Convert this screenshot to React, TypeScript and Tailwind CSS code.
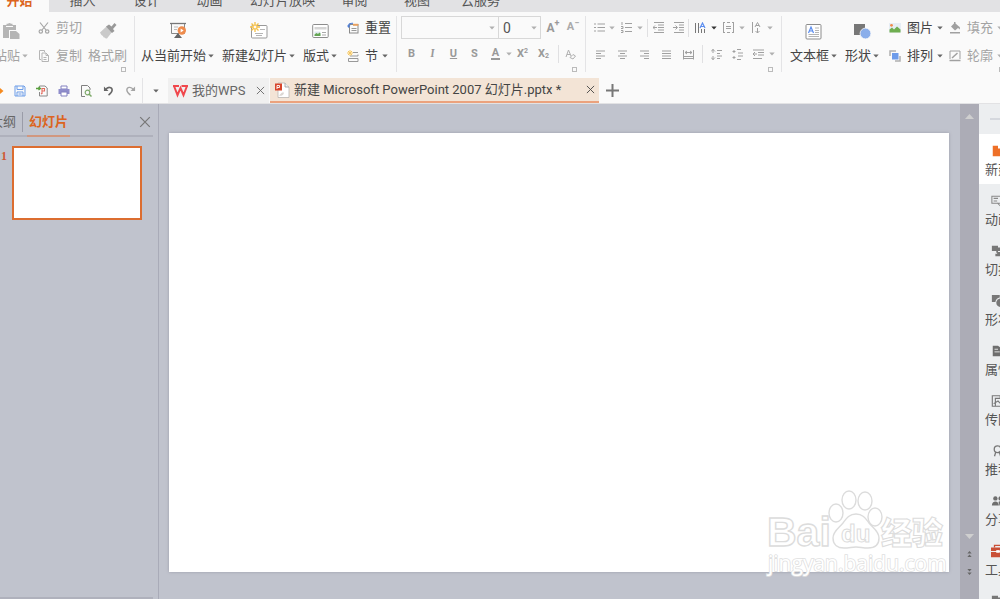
import type { ReactNode } from "react";
import clsx from "clsx";

const menuTabs = [
  { label: "插入", width: "w-[66px]" },
  { label: "设计", width: "w-[62px]" },
  { label: "动画", width: "w-[64px]" },
  { label: "幻灯片放映", width: "w-[82px]" },
  { label: "审阅", width: "w-[62px]" },
  { label: "视图", width: "w-[63px]" },
  { label: "云服务", width: "w-[64px]" },
];

const Caret = ({ dark = false, faint = false }: { dark?: boolean; faint?: boolean }) => (
  <svg
    width="6"
    height="4"
    viewBox="0 0 6 4"
    className={clsx("shrink-0", dark ? "text-[#333]" : faint ? "text-[#b0b0b0]" : "text-[#666]")}
  >
    <path d="M0.3 0.5h5.4L3 3.500z" fill="currentColor" />
  </svg>
);

const CloseIcon = ({ size = 9 }: { size?: number }) => (
  <svg width={size} height={size} viewBox="0 0 10 10" fill="none" stroke="currentColor" strokeWidth="1">
    <path d="M1 1l8 8M9 1L1 9" />
  </svg>
);

// Small square in the corner of a ribbon group
const Launcher = () => (
  <button aria-label="更多设置" className="absolute right-2 bottom-0 h-[5px] w-[5px] border border-[#bbb]" />
);

const Group = ({ children, className }: { children: ReactNode; className?: string }) => (
  <div className={clsx("relative flex h-14 shrink-0 border-r border-[#e4e4e6]", className)}>{children}</div>
);

interface ButtonProps {
  label: string;
  icon: ReactNode;
  muted?: boolean;
  caret?: boolean;
  className?: string;
}

const BigButton = ({ label, icon, muted, caret, className }: ButtonProps) => (
  <button
    className={clsx(
      "flex shrink-0 flex-col items-center gap-2 pt-1.5 whitespace-nowrap",
      muted ? "text-[#a3a3a3]" : "text-[#444]",
      className,
    )}
  >
    <span className="flex h-[18px] items-center">{icon}</span>
    <span className="flex items-center gap-0.5 leading-4">
      {label}
      {caret && <Caret faint={muted} />}
    </span>
  </button>
);

const SmallButton = ({ label, icon, muted, caret }: ButtonProps) => (
  <button
    className={clsx("flex h-5 shrink-0 items-center whitespace-nowrap", muted ? "text-[#a3a3a3]" : "text-[#444]")}
  >
    <span className="flex w-[18px] shrink-0">{icon}</span>
    {label}
    {caret && (
      <span className="ml-1">
        <Caret faint={muted} />
      </span>
    )}
  </button>
);

const ToolButton = ({ label, className, children }: { label: string; className?: string; children: ReactNode }) => (
  <button aria-label={label} className={clsx("flex h-4 shrink-0 items-center justify-center", className)}>
    {children}
  </button>
);

const Sep = () => <span className="h-[18px] w-px shrink-0 bg-[#e0e0e2]" />;

/* ---------- line icons used in the paragraph group ---------- */
const LineIcon = ({ d, width = 11 }: { d: string; width?: number }) => (
  <svg width={width} height="11" viewBox={`0 0 ${width} 11`} fill="none" stroke="#a0a0a0" strokeWidth="1">
    <path d={d} />
  </svg>
);

const IconPaste = () => (
  <svg width="18" height="18" viewBox="0 0 18 18" fill="#b5b5b5">
    <path d="M1 3h3.500V1.800h1.500a2 2 0 0 1 3 0h1.500V3H14v5H7v8H1z" />
    <path d="M4 4.500h7" stroke="#fafafa" />
    <path d="M8 9h6l3.500 3v5H8z" />
  </svg>
);

const IconCut = () => (
  <svg width="12" height="12" viewBox="0 0 12 12" fill="none" stroke="#a5a5a5" strokeWidth="1.200">
    <path d="M2 0.500L8 8M10 0.500L4 8" />
    <circle cx="2.800" cy="9.500" r="1.700" />
    <circle cx="9.200" cy="9.500" r="1.700" />
  </svg>
);

const IconCopy = () => (
  <svg width="12" height="12" viewBox="0 0 12 12" fill="none" stroke="#b5b5b5">
    <path d="M3 9.500H1.500v-9h5V2" />
    <path d="M4 3h4l2.500 2.500v6H4z" />
    <path d="M8 3v2.500h2.500M5.500 7.500h3M5.500 9.500h3" />
  </svg>
);

const IconBrush = () => (
  <svg width="18" height="18" viewBox="0 0 18 18">
    <path d="M1 10.500L7.500 4.500l5.500 5.500-5 6.500c-1.500 0-2-.5-2.500-1-1 0-1.500-.7-1.500-1.500-1.500-.5-2-1.500-3-3.500z" fill="#cacaca" />
    <path d="M7 4.500l3-2 2.500 2L15.500 1l2 2-3.500 4 1.500 2-2.500 2z" fill="#999" />
  </svg>
);

const IconPlay = () => (
  <svg width="18" height="18" viewBox="0 0 18 18" fill="none">
    <path d="M1 1.500h16" stroke="#777" strokeWidth="1.300" />
    <path d="M2.500 2v9.500h13V2" stroke="#888" />
    <path d="M5 5h4M5 7.500h3" stroke="#bbb" />
    <path d="M9 11l-4 5h8z" fill="#666" />
    <circle cx="12.800" cy="8.500" r="4.200" fill="#ee8b4c" />
    <path d="M11.600 6.500v4l3-2z" fill="#fff" />
  </svg>
);

const Spark = () => (
  <g>
    <path d="M5 0v10M0 5h10M1.500 1.500l7 7M8.500 1.500l-7 7" stroke="#f7c145" strokeWidth="1.300" />
    <circle cx="5" cy="5" r="2" fill="#fffaf0" stroke="#f7c145" />
  </g>
);

const IconNewSlide = () => (
  <svg width="18" height="18" viewBox="0 0 18 18" fill="none">
    <rect x="1.500" y="3.500" width="15.500" height="12.500" rx="1" stroke="#999" fill="#fff" />
    <path d="M10 7.500h5M5 11.500h8M6 13.500h6" stroke="#b5b5b5" />
    <Spark />
  </svg>
);

const IconLayout = () => (
  <svg width="17" height="16" viewBox="0 0 17 16" fill="none">
    <rect x="0.700" y="1.500" width="15.500" height="13" rx="1" stroke="#8c8c8c" fill="#fff" />
    <path d="M2.500 4h12v2.500h-12z" fill="#d5d5d5" />
    <path d="M2.500 8.500h6v4.500h-6z" fill="#dfe9ee" />
    <path d="M2.500 13v-1.500L4.500 10l1.500 1 1.500-1.500 1 1V13z" fill="#64a653" />
    <path d="M10 9.500h4M10 12h4" stroke="#aaa" />
  </svg>
);

const IconReset = () => (
  <svg width="12" height="12" viewBox="0 0 12 12" fill="none">
    <rect x="2.500" y="2.500" width="8.500" height="8.500" stroke="#8a8a8a" />
    <path d="M6 1.800h5.300v2H6z" fill="#e9a15f" />
    <path d="M4.500 6.500h5M4.500 8.500h5" stroke="#999" />
    <path d="M1.500 4.500C1.500 2 3 1 6 1.300" stroke="#4f7fd6" strokeWidth="1.200" />
    <path d="M0 3.500h3.500L1.500 6z" fill="#4f7fd6" />
  </svg>
);

const IconSection = () => (
  <svg width="12" height="12" viewBox="0 0 12 12" fill="none" stroke="#999">
    <path d="M6 2.500h5M3 6h8V4.500M1.500 8.500H11v3H1.500z" />
    <path d="M3 0v6M0 3h6M1 1l4 4M5 1L1 5" stroke="#f7c860" />
  </svg>
);

const IconTextBox = () => (
  <svg width="17" height="17" viewBox="0 0 17 17" fill="none">
    <rect x="1" y="1.500" width="15" height="14.500" rx="1" stroke="#8c8c8c" fill="#fff" />
    <path d="M3.500 10L6 4l2.500 6M4.500 8h3" stroke="#5b8def" strokeWidth="1.200" />
    <path d="M10 5h4M10 7.500h4M10 9.500h4M3.500 11.500H14M3.500 13.500H14" stroke="#b5b5b5" />
  </svg>
);

const IconShape = () => (
  <svg width="18" height="18" viewBox="0 0 18 18">
    <path d="M1 2h11v11H1z" fill="#777" />
    <circle cx="12.500" cy="11.500" r="5.400" fill="#8aaeea" stroke="#fafafa" strokeWidth="0.800" />
  </svg>
);

const IconPicture = () => (
  <svg width="12" height="12" viewBox="0 0 12 12">
    <path d="M0 1h12v9.500H0z" fill="#e6edf5" />
    <circle cx="2.500" cy="3.300" r="1.400" fill="#f08a4b" />
    <path d="M0.500 10.500V7.500L3 5.500l2 2L8 4.500l3.500 3v3z" fill="#6fae50" />
  </svg>
);

const IconArrange = () => (
  <svg width="12" height="12" viewBox="0 0 12 12">
    <path d="M1 6V1h6M6 11h5V6" fill="none" stroke="#b0b0b0" strokeWidth="1.500" />
    <path d="M3 3h6.500v6.500H3z" fill="#6d9bea" />
  </svg>
);

const IconFill = () => (
  <svg width="12" height="12" viewBox="0 0 12 12" fill="#a0a0a0">
    <path d="M2 4.500L5 1.500V0h1.500v1.500L10 4.500c1.200.3 1.200 2 .5 3-.5-1-1.500-1.500-1.500-1.500L6 8.500z" />
    <path d="M1 10h10v1.500H1z" />
  </svg>
);

const IconOutline = () => (
  <svg width="12" height="12" viewBox="0 0 12 12" fill="none" stroke="#a0a0a0">
    <path d="M1 9V1h10v8" />
    <path d="M3 8L8.500 3" strokeWidth="1.500" />
    <path d="M0.500 10.500h11" strokeWidth="1.500" />
  </svg>
);

const IconPptx = () => (
  <svg width="16" height="16" viewBox="0 0 16 16">
    <path d="M4 1h7l4 4v10.500H4z" fill="#fff" stroke="#b9b4b0" strokeWidth="0.800" />
    <path d="M11 1v4h4" fill="#eee" stroke="#999" strokeWidth="0.800" />
    <path d="M1 1.500h7v7H1z" fill="#d8452b" />
    <path d="M3 7V3.500h2.500v2H3" fill="none" stroke="#fff" strokeWidth="0.900" />
    <path d="M5 13.500a3.500 3.500 0 0 0 5-3H8z" fill="#dcd6d2" />
  </svg>
);

const quickIcons = [
  {
    label: "保存",
    icon: (
      <svg width="12" height="12" viewBox="0 0 12 12" fill="none" stroke="#6d9de8">
        <path d="M1 1h9l1 1v9H1z" />
        <path d="M3 1v3.500h6V1M3 11V7h6v4M4.500 9h3" />
      </svg>
    ),
  },
  {
    label: "输出为PDF",
    icon: (
      <svg width="12" height="12" viewBox="0 0 12 12" fill="none">
        <path d="M3.500 3V1H9l2.200 2v8H3.500V7" stroke="#8a8a8a" />
        <path d="M0 3.500h4M2.500 2l2 1.500-2 1.500" stroke="#58a13c" strokeWidth="1.300" />
        <path d="M6 9V3.500h2.500v2.500H6M5 9l1.500-1" stroke="#e36b5d" strokeWidth="1.100" />
      </svg>
    ),
  },
  {
    label: "打印",
    icon: (
      <svg width="12" height="12" viewBox="0 0 12 12">
        <path d="M3 1h6v3H3z" fill="#fff" stroke="#8280c0" />
        <path d="M0.500 4h11v5h-11z" fill="#8f8dcb" />
        <path d="M3 7h6v4H3z" fill="#fff" stroke="#8280c0" />
      </svg>
    ),
  },
  {
    label: "打印预览",
    icon: (
      <svg width="12" height="12" viewBox="0 0 12 12" fill="none">
        <path d="M5 11.500H1.500v-11h6l2.500 2.500v2" stroke="#808080" />
        <circle cx="7.500" cy="7.500" r="2.300" stroke="#7da869" strokeWidth="1.200" />
        <path d="M9 9l2.500 2.500" stroke="#7da869" strokeWidth="1.500" />
      </svg>
    ),
  },
  {
    label: "撤销",
    icon: (
      <svg width="11" height="11" viewBox="0 0 12 12">
        <path d="M1 1.500v5h5z" fill="#666" />
        <path d="M3 5C5 1.500 10 2 10 5.500 10 8 8 9.500 6 11" fill="none" stroke="#666" strokeWidth="1.700" />
      </svg>
    ),
  },
  {
    label: "恢复",
    icon: (
      <svg width="11" height="11" viewBox="0 0 12 12">
        <path d="M11 1.500v5H6z" fill="#a5a5a5" />
        <path d="M9 5C7 1.500 2 2 2 5.500 2 8 4 9.500 6 11" fill="none" stroke="#a5a5a5" strokeWidth="1.500" />
      </svg>
    ),
  },
];

const sideItems = [
  {
    label: "新建",
    active: true,
    icon: <path d="M2 2h6v3h7v9H2z" fill="#ee7028" />,
  },
  {
    label: "动画",
    icon: <path d="M1 2.500h14v8H1zM3 5h5M3 8h4M7 10l4 4 2-4" fill="none" stroke="#888" strokeWidth="1.200" />,
  },
  {
    label: "切换",
    icon: <path d="M1 2h7v2h4v4H8v2H6V8H1zM7 9h8v5H5v-3h2z" fill="#777" />,
  },
  {
    label: "形状",
    icon: (
      <g fill="#777">
        <path d="M1 1h9v3a6 6 0 0 0-5 5H1z" />
        <circle cx="11" cy="10" r="5" />
      </g>
    ),
  },
  {
    label: "属性",
    icon: (
      <g>
        <path d="M2 2h6l7 5v7H2z" fill="#6e6e6e" />
        <path d="M4 6h4M4 9h6" stroke="#eee" />
      </g>
    ),
  },
  {
    label: "传图",
    icon: <path d="M5 14H1.500V2h9v3M5 5h10v9H5zM3 11l5-3 3 3" fill="none" stroke="#777" strokeWidth="1.300" />,
  },
  {
    label: "推荐",
    icon: (
      <g fill="none" stroke="#777" strokeWidth="1.500">
        <circle cx="7.500" cy="6" r="3.800" />
        <path d="M5.500 9L4 14M9.500 9l1.500 5" />
      </g>
    ),
  },
  {
    label: "分享",
    icon: (
      <g fill="#6e6e6e">
        <circle cx="5" cy="5" r="2.500" />
        <circle cx="11" cy="5" r="2.500" />
        <path d="M1 13c0-6 8-6 8 0zM9.500 13c0-2-.5-3-1-4 3-2 6.500 0 6.500 4z" />
      </g>
    ),
  },
  {
    label: "工具",
    icon: (
      <g>
        <path d="M4 4V1.500h8V4" fill="none" stroke="#c94f36" strokeWidth="1.500" />
        <path d="M-1 4h18v4H-1zM-1 9h18v6H-1z" fill="#c94f36" />
        <path d="M6 7h4v3H6z" fill="#fff" />
      </g>
    ),
  },
  {
    label: "备份",
    icon: <path d="M1 2h7v2h7v10H1z" fill="#777" />,
  },
];

const MenuBar = () => (
  <nav className="flex h-3 shrink-0 items-end overflow-hidden bg-[#e2e2e4] text-[#555]">
    <a href="#start" className="w-[49px] shrink-0 bg-[#fafafa] pr-2.5 pb-[3px] text-center leading-4 font-bold text-[#dc6420]">
      开始
    </a>
    {menuTabs.map((tab) => (
      <a
        key={tab.label}
        href={`#${tab.label}`}
        className={clsx("shrink-0 pb-[3px] pl-px text-center leading-4 whitespace-nowrap", tab.width)}
      >
        {tab.label}
      </a>
    ))}
  </nav>
);

const FontGroup = () => (
  <Group className="w-[189px] flex-col pl-1">
    <div className="flex items-center">
      <div className="relative">
        <select aria-label="字体" className="block h-[23px] w-[98px] appearance-none border border-[#d8d8d8]" />
        <span className="pointer-events-none absolute inset-y-0 right-1 flex items-center">
          <Caret faint />
        </span>
      </div>
      <div className="relative -ml-px">
        <select
          aria-label="字号"
          className="block h-[23px] w-[43px] appearance-none border border-[#d8d8d8] pl-1 text-sm leading-5 text-[#555]"
        >
          <option>0</option>
        </select>
        <span className="pointer-events-none absolute inset-y-0 right-1 flex items-center">
          <Caret faint />
        </span>
      </div>
      <ToolButton label="增大字号" className="ml-1.5 w-3 text-xs font-bold text-[#999]">
        A<sup className="text-[9px]">+</sup>
      </ToolButton>
      <ToolButton label="减小字号" className="ml-2 w-3 text-[11px] font-bold text-[#aaa]">
        A<sup className="text-[9px]">−</sup>
      </ToolButton>
    </div>
    <div className="mt-1.5 flex items-center text-[11px] text-[#999]">
      <ToolButton label="加粗" className="w-[21px] font-bold">B</ToolButton>
      <ToolButton label="倾斜" className="w-[21px] font-serif font-bold italic">I</ToolButton>
      <ToolButton label="下划线" className="w-[21px] font-bold underline">U</ToolButton>
      <ToolButton label="阴影" className="w-[21px] font-bold">S</ToolButton>
      <ToolButton label="字体颜色" className="w-[21px]">
        <span className="border-b-2 border-[#999] px-px leading-[10px] font-bold">A</span>
      </ToolButton>
      <Caret faint />
      <ToolButton label="上标" className="w-[21px] font-bold">
        X<sup className="text-[7px]">2</sup>
      </ToolButton>
      <ToolButton label="下标" className="w-[21px] font-bold">
        X<sub className="text-[7px]">2</sub>
      </ToolButton>
      <span className="ml-1" />
      <Sep />
      <ToolButton label="清除格式" className="w-[22px]">
        <svg width="11" height="11" viewBox="0 0 11 11" fill="none" stroke="#b0b0b0">
          <path d="M1 8l2.500-7L6 7M2 5.500h3" />
          <path d="M5 8.500l3-3 2.500 1.500-2.500 3z" />
        </svg>
      </ToolButton>
    </div>
    <Launcher />
  </Group>
);

const ParagraphGroup = () => (
  <Group className="w-[196px] flex-col pl-[3px]">
    <div className="flex h-[23px] items-center">
      <ToolButton label="项目符号" className="w-5">
        <LineIcon d="M0 2h2M3.500 2H11M0 5.500h2M3.500 5.500H11M0 9h2M3.500 9H11" />
      </ToolButton>
      <Caret faint />
      <ToolButton label="编号" className="w-[22px]">
        <LineIcon d="M1 0v3M4 1.500h7M0 4.500h2v2H0M4 5.500h7M0 8.500h2v2H0M4 9.500h7" />
      </ToolButton>
      <Caret faint />
      <span className="ml-1" />
      <Sep />
      <ToolButton label="减少缩进" className="w-5">
        <LineIcon d="M1 .5h10M5 3h6M5 5.500h6M5 8h6M1 10.500h10M0 5.500h4M2 3.500l-2 2 2 2" />
      </ToolButton>
      <ToolButton label="增加缩进" className="w-5">
        <LineIcon d="M1 .5h10M6 3h5M6 5.500h5M6 8h5M1 10.500h10M0 5.500h4M2.500 3.500l2 2-2 2" />
      </ToolButton>
      <Sep />
      <ToolButton label="文字方向" className="w-[22px]">
        <svg width="12" height="12" viewBox="0 0 12 12" fill="none" stroke="#777">
          <path d="M1.500 1v10M4.500 1v10M7.500 7v4M10.500 7v4" />
          <path d="M6 6l2.500-5L11 6M7 4.500h3" stroke="#5b8def" strokeWidth="1.200" />
        </svg>
      </ToolButton>
      <Caret dark />
      <ToolButton label="对齐文本" className="w-[22px]">
        <LineIcon d="M.5 0v11M10.500 0v11M0 .5h2M4 .5h3M9 .5h2M0 10.500h2M4 10.500h3M9 10.500h2M3 4.500h5M3 6.500h5" />
      </ToolButton>
      <Caret faint />
      <ToolButton label="竖排" className="w-[22px]">
        <LineIcon d="M1.500 0v11M4 5l2.500-4.500L9 5M5 3.500h3M6.500 6v5M4.500 9l2 2 2-2" />
      </ToolButton>
      <Caret faint />
    </div>
    <div className="mt-1.5 flex items-center">
      <ToolButton label="左对齐" className="w-[22px]">
        <LineIcon d="M1 2h9M1 4.500h5M1 7h9M1 9.500h5" />
      </ToolButton>
      <ToolButton label="居中" className="w-[22px]">
        <LineIcon d="M1 2h9M3 4.500h5M1 7h9M3 9.500h5" />
      </ToolButton>
      <ToolButton label="右对齐" className="w-[22px]">
        <LineIcon d="M1 2h9M5 4.500h5M1 7h9M5 9.500h5" />
      </ToolButton>
      <ToolButton label="两端对齐" className="w-[22px]">
        <LineIcon d="M1 2h9M1 4.500h9M1 7h9M1 9.500h9" />
      </ToolButton>
      <ToolButton label="分散对齐" className="w-[22px]">
        <LineIcon d="M.5 1v9.500M10.500 1v9.500M2 3.500h7M4 2L2 3.500 4 5M7 2l2 1.500L7 5M0 7.500h11M0 9.500h11" />
      </ToolButton>
      <span className="ml-[3px]" />
      <Sep />
      <ToolButton label="行距" className="ml-0.5 w-[22px]">
        <LineIcon d="M2 0v4M2 7v4M0 2.500L2 .5l2 2M0 8.500l2 2 2-2M6 1.500h5M6 4.500h3M6 7h5M6 9.500h3" />
      </ToolButton>
      <ToolButton label="段落间距" className="w-5">
        <LineIcon d="M5 .5h4M6 4h5M6 7h5M5 10.500h4M2 1v3M2 7v3M0.500 2.500h3M0.500 8.500h3" />
      </ToolButton>
      <ToolButton label="制表" className="w-[22px]">
        <LineIcon d="M0 1h11M5 3.500h6M5 6h6M0 9.500h9M0 5h4M2 3L0 5l2 2" />
      </ToolButton>
      <Caret faint />
    </div>
    <Launcher />
  </Group>
);

const Ribbon = () => (
  <section className="flex h-[66px] shrink-0 overflow-hidden bg-[#fafafa] pt-1">
    <Group className="w-[135px]">
      <BigButton label="粘贴" muted caret className="-ml-[7px] w-9" icon={<IconPaste />} />
      <div className="ml-[9px] flex flex-col gap-2 pt-0.5">
        <SmallButton label="剪切" muted icon={<IconCut />} />
        <SmallButton label="复制" muted icon={<IconCopy />} />
      </div>
      <BigButton label="格式刷" muted className="ml-1.5" icon={<IconBrush />} />
      <Launcher />
    </Group>
    <Group className="w-[262px] pl-1.5">
      <BigButton label="从当前开始" caret icon={<IconPlay />} />
      <BigButton label="新建幻灯片" caret className="ml-2" icon={<IconNewSlide />} />
      <BigButton label="版式" caret className="ml-2" icon={<IconLayout />} />
      <div className="ml-2.5 flex flex-col gap-2 pt-0.5">
        <SmallButton label="重置" icon={<IconReset />} />
        <SmallButton label="节" caret icon={<IconSection />} />
      </div>
    </Group>
    <FontGroup />
    <ParagraphGroup />
    <div className="relative flex h-14 flex-1 pl-2">
      <BigButton label="文本框" caret icon={<IconTextBox />} />
      <BigButton label="形状" caret className="ml-2" icon={<IconShape />} />
      <div className="ml-2.5 flex flex-col gap-2 pt-0.5">
        <SmallButton label="图片" caret icon={<IconPicture />} />
        <SmallButton label="排列" caret icon={<IconArrange />} />
      </div>
      <div className="ml-1.5 flex flex-col gap-2 pt-0.5">
        <SmallButton label="填充" muted caret icon={<IconFill />} />
        <SmallButton label="轮廓" muted caret icon={<IconOutline />} />
      </div>
      <button aria-label="更多设置" className="absolute right-0 bottom-0 h-[5px] w-1 border border-r-0 border-[#bbb]" />
    </div>
  </section>
);

const DocumentTabs = () => (
  <section className="flex h-[26px] shrink-0 items-stretch overflow-hidden border-b border-[#e2e2e4] bg-[#fafafa]">
    <div className="flex items-center">
      <svg width="9" height="10" viewBox="0 0 9 10">
        <path d="M0 2l3.500 3L0 8z" fill="#f58a1f" />
      </svg>
      {quickIcons.map((item) => (
        <ToolButton key={item.label} label={item.label} className="w-[22px]">
          {item.icon}
        </ToolButton>
      ))}
    </div>
    <span className="ml-px w-px bg-[#e4e4e6]" />
    <button aria-label="自定义快速访问工具栏" className="flex w-[25px] items-center justify-center">
      <Caret />
    </button>
    <div className="flex w-[101px] shrink-0 items-center bg-[#f0f0f0] px-1 text-[#666]">
      <svg width="17" height="14" viewBox="0 0 17 14" className="mr-[3px] shrink-0" fill="none" stroke="#f0474c" strokeWidth="2">
        <path d="M1 2h6M2 2l3.500 9L8.500 4l3 7L15 2M9.500 2H16" />
      </svg>
      <a href="#wps" className="whitespace-nowrap">我的WPS</a>
      <button aria-label="关闭我的WPS" className="ml-auto text-[#666]">
        <CloseIcon />
      </button>
    </div>
    <div className="ml-px flex w-[329px] shrink-0 items-center border-b-2 border-[#eba27d] bg-[#f3e4d6] px-1 text-[#444]">
      <IconPptx />
      <a href="#doc" className="ml-1 whitespace-nowrap">新建 Microsoft PowerPoint 2007 幻灯片.pptx *</a>
      <button aria-label="关闭文档" className="ml-auto">
        <CloseIcon />
      </button>
    </div>
    <button aria-label="新建标签" className="ml-[5px] flex w-4 items-center justify-center">
      <svg width="13" height="13" viewBox="0 0 13 13" stroke="#777" strokeWidth="2">
        <path d="M6.500 0v13M0 6.500h13" />
      </svg>
    </button>
  </section>
);

const SlidePanel = () => (
  <aside className="flex w-[159px] shrink-0 flex-col overflow-hidden border-r border-[#a9abb8]">
    <div className="mr-[5px] flex h-[33px] shrink-0 items-stretch border-b-2 border-[#afb1bc]">
      <div className="-ml-2.5 flex items-center pt-1 text-[#666]">
        <button className="whitespace-nowrap">大纲</button>
      </div>
      <span className="mt-2 ml-1.5 h-5 w-px bg-[#9a9ca8]" />
      <button className="-mb-0.5 ml-1 border-b-2 border-[#d1977f] px-0.5 pt-1 font-bold whitespace-nowrap text-[#dc6420]">
        幻灯片
      </button>
      <button aria-label="关闭窗格" className="mr-0.5 ml-auto pt-1 text-[#777]">
        <CloseIcon size={12} />
      </button>
    </div>
    <div className="flex pt-[9px]">
      <span className="w-3 shrink-0 pt-0.5 pl-px font-['Liberation_Serif',serif] text-xs font-bold text-[#cf5a34]">1</span>
      <button aria-label="幻灯片 1" className="h-[74px] w-[130px] shrink-0 border-2 border-[#dc6d30] bg-white" />
    </div>
    <div className="mt-auto mr-[5px] h-0.5 bg-[#afb1bc]" />
  </aside>
);

const Watermark = () => (
  <svg
    width="190"
    height="100"
    viewBox="0 0 190 100"
    className="pointer-events-none absolute -right-1.5 -bottom-3"
    fill="#fff"
    stroke="#dcdcdc"
    strokeWidth="1.400"
  >
    <text x="2" y="62" fontSize="41" fontWeight="bold" fontFamily="Liberation Sans, sans-serif">
      Bai
    </text>
    <ellipse cx="71" cy="29" rx="7" ry="9" />
    <ellipse cx="84" cy="16" rx="7" ry="9" />
    <ellipse cx="100" cy="17" rx="7" ry="9" />
    <ellipse cx="110" cy="33" rx="7" ry="9" />
    <path d="M91 30c7 0 10 5 13 9 4 5 10 8 10 15 0 8-6 10-11 10-5 0-8-1-12-1s-7 1-12 1c-6 0-11-3-11-10s6-10 10-15c3-4 6-9 13-9z" />
    <text x="76" y="58" fontSize="24" fontWeight="bold" fontFamily="Liberation Sans, sans-serif" strokeWidth="1">
      du
    </text>
    <text x="116" y="60" fontSize="31" fontWeight="900" fontFamily="Noto Sans CJK SC, sans-serif" strokeWidth="1.100">
      经验
    </text>
    <text x="3" y="87" fontSize="21" fontFamily="Open Sans, sans-serif" stroke="#e0e0e0" strokeWidth="1.600" paintOrder="stroke">
      jingyan.baidu.com
    </text>
  </svg>
);

const ScrollBar = () => (
  <div className="flex w-[19px] shrink-0 flex-col items-center bg-[#acacb6] pt-2.5">
    <button aria-label="向上滚动">
      <svg width="9" height="5" viewBox="0 0 9 5" className="block">
        <path d="M0 5h9L4.500 0z" fill="#cfcfcf" />
      </svg>
    </button>
    <button aria-label="向下滚动" className="mt-auto">
      <svg width="9" height="5" viewBox="0 0 9 5" className="block">
        <path d="M0 0h9L4.500 5z" fill="#cfcfcf" />
      </svg>
    </button>
    <button aria-label="上一张" className="mt-3">
      <svg width="5" height="6" viewBox="0 0 5 7" fill="#666" className="block">
        <path d="M2.500 0L5 3H0zM2.500 4L5 7H0z" />
      </svg>
    </button>
    <button aria-label="下一张" className="mt-3 mb-6">
      <svg width="5" height="6" viewBox="0 0 5 7" fill="#666" className="block">
        <path d="M0 0h5L2.500 3zM0 4h5L2.500 7z" />
      </svg>
    </button>
  </div>
);

const TaskPane = () => (
  <aside className="w-[21px] shrink-0 overflow-hidden bg-[#eceef0]">
    <div className="flex h-[30px] w-[38px] items-center justify-center">
      <span className="h-0.5 w-4 bg-[#d5d8de]" />
    </div>
    {sideItems.map((item) => (
      <button
        key={item.label}
        className={clsx(
          "flex h-[50px] w-[38px] flex-col items-center gap-1 pt-2.5 text-[#555]",
          item.active && "bg-white",
        )}
      >
        <svg width="14" height="14" viewBox="0 0 16 16" className="shrink-0">
          {item.icon}
        </svg>
        <span className="leading-4 whitespace-nowrap">{item.label}</span>
      </button>
    ))}
  </aside>
);

const App = () => (
  <div className="flex h-screen flex-col overflow-hidden bg-[#c0c3cd] font-[Roboto,'Noto_Sans_CJK_SC',sans-serif] text-[13px]">
    <MenuBar />
    <Ribbon />
    <DocumentTabs />
    <main className="flex min-h-0 flex-1">
      <SlidePanel />
      <div className="flex min-w-0 flex-1 pt-[29px] pr-[11px] pb-[27px] pl-2.5">
        <div className="relative flex-1 bg-white shadow-[0_0_3px_#9a9ca8]">
          <Watermark />
        </div>
      </div>
      <ScrollBar />
      <TaskPane />
    </main>
  </div>
);

export default App;
